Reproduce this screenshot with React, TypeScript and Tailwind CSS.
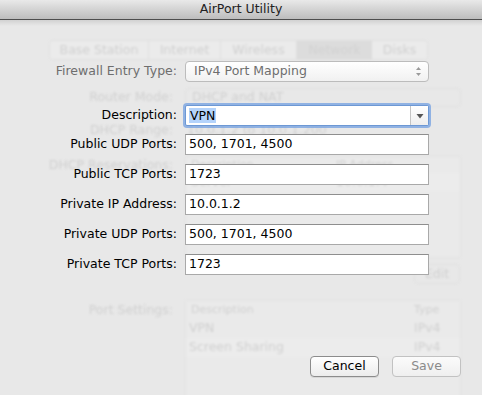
import React from 'react'

const font = { fontFamily: '"DejaVu Sans", "Liberation Sans", sans-serif' }

// faint, blurred window lying behind the sheet
function BackWindow() {
  return (
    <div className="absolute inset-0 text-[12.5px] text-[#d0d0d0] blur-[1.2px]">
      <div className="ml-[49px] mt-[20px] flex h-[20px] w-[379px] rounded-[4px] border border-[#e0e0e0] bg-[#ebebeb]">
        <div className="flex w-[99px] items-center justify-center border-r border-[#e0e0e0]">Base Station</div>
        <div className="flex w-[72px] items-center justify-center border-r border-[#e0e0e0]">Internet</div>
        <div className="flex w-[76px] items-center justify-center border-r border-[#e0e0e0]">Wireless</div>
        <div className="flex w-[75px] items-center justify-center bg-[#dcdcdc] text-[#d2d2d2]">Network</div>
        <div className="flex flex-1 items-center justify-center">Disks</div>
      </div>
      <div className="mt-[27px] flex h-[20px] items-center">
        <div className="w-[177px] pr-1 text-right">Router Mode:</div>
        <div className="ml-[8px] flex h-[19px] w-[276px] items-center rounded-[4px] border border-[#e0e0e0] pl-[6px]">DHCP and NAT</div>
      </div>
      <div className="mt-[13px] flex h-[20px] items-center">
        <div className="w-[177px] pr-1 text-right">DHCP Range:</div>
        <div className="ml-[10px]">10.0.1.2 to 10.0.1.200</div>
      </div>
      <div className="mt-[16px] flex">
        <div className="w-[177px] pr-1 text-right">DHCP Reservations:</div>
        <div className="ml-[8px] w-[276px] border border-[#e3e3e3] bg-[#eaeaea]">
          <div className="flex h-[16px] items-center text-[11px]">
            <div className="w-[150px] pl-[5px]">Description</div>
            <div>IP Address</div>
          </div>
          <div className="flex h-[18px] items-center bg-[#ececec]">
            <div className="w-[150px] pl-[5px]">Server</div>
            <div>10.0.1.4</div>
          </div>
          <div className="h-[66px]" />
        </div>
      </div>
      <div className="mt-[6px] flex justify-end pr-[22px]">
        <div className="flex h-[20px] w-[46px] items-center justify-center rounded-[4px] border border-[#e0e0e0]">Edit</div>
      </div>
      <div className="mt-[16px] flex">
        <div className="w-[177px] pt-[1px] pr-1 text-right">Port Settings:</div>
        <div className="ml-[8px] w-[276px] border border-[#e4e4e4] bg-[#eaeaea]">
          <div className="flex h-[18px] items-center text-[11px]">
            <div className="w-[228px] pl-[5px]">Description</div>
            <div>Type</div>
          </div>
          <div className="flex h-[19px] items-center">
            <div className="w-[228px] pl-[3px]">VPN</div>
            <div>IPv4</div>
          </div>
          <div className="flex h-[19px] items-center bg-[#ececec]">
            <div className="w-[228px] pl-[3px]">Screen Sharing</div>
            <div>IPv4</div>
          </div>
          <div className="h-[40px]" />
        </div>
      </div>
    </div>
  )
}

function Field({ label, value }: { label: string; value: string }) {
  return (
    <div className="flex h-[21px] items-center">
      <div className="w-[177px] text-right text-black">{label}</div>
      <div className="ml-[8px] flex h-[21px] w-[244px] items-center border border-[#a9a9a9] border-t-[#8e8e8e] bg-white pl-[3px] text-black">
        {value}
      </div>
    </div>
  )
}

export default function App() {
  return (
    <div className="h-[395px] w-[482px] overflow-hidden bg-[#e8e8e8] text-[12.5px]" style={font}>
      <div className="flex h-[20px] items-center justify-center border-b border-[#4d4d4d] bg-gradient-to-b from-[#e9e9e9] to-[#bdbdbd] text-[12.5px] text-[#222]">
        AirPort Utility
      </div>
      <div className="relative h-[375px]">
        <BackWindow />
        <div className="absolute inset-x-0 top-0 h-[6px] bg-gradient-to-b from-[#c8c8c8]/70 to-transparent" />
        <div className="absolute inset-0 pt-[41px]">
          <div className="flex h-[21px] items-center">
            <div className="w-[177px] text-right text-[#6e6e6e]">Firewall Entry Type:</div>
            <div className="ml-[8px] flex h-[21px] w-[244px] items-center justify-between rounded-[4px] border border-[#bcbcbc] bg-gradient-to-b from-white to-[#f1f1f1] pl-[8px] pr-[6px] text-[#6e6e6e]">
              <span>IPv4 Port Mapping</span>
              <svg width="7" height="11" viewBox="0 0 7 11">
                <path d="M3.5 1 L6 4 L1 4 Z" fill="#9a9a9a" />
                <path d="M3.5 10 L6 7 L1 7 Z" fill="#9a9a9a" />
              </svg>
            </div>
          </div>
          <div className="mt-[23px] flex h-[21px] items-center">
            <div className="w-[177px] text-right text-black">Description:</div>
            <div className="ml-[8px] flex h-[21px] w-[244px] rounded-[2px] border border-[#6d98d4] bg-white shadow-[0_0_0_2px_rgba(115,160,225,0.75)]">
              <div className="flex flex-1 items-center pl-[3px] text-black">
                <span className="bg-[#b4d3fb] px-[1px] leading-[15px]">VPN</span>
              </div>
              <div className="flex w-[18px] items-center justify-center border-l border-[#c4c4c4] bg-gradient-to-b from-white to-[#eeeeee]">
                <svg width="8" height="6" viewBox="0 0 8 6">
                  <path d="M0.5 1 L7.5 1 L4 5.5 Z" fill="#555" />
                </svg>
              </div>
            </div>
          </div>
          <div className="mt-[8px] flex flex-col gap-[9px]">
            <Field label="Public UDP Ports:" value="500, 1701, 4500" />
            <Field label="Public TCP Ports:" value="1723" />
            <Field label="Private IP Address:" value="10.0.1.2" />
            <Field label="Private UDP Ports:" value="500, 1701, 4500" />
            <Field label="Private TCP Ports:" value="1723" />
          </div>
          <div className="mt-[81px] flex justify-end gap-[13px] pr-[21px]">
            <button className="flex h-[21px] w-[69px] items-center justify-center rounded-[4px] border border-[#8c8c8c] bg-gradient-to-b from-white to-[#ececec] text-black shadow-[0_1px_0_rgba(0,0,0,0.08)]">
              Cancel
            </button>
            <button className="flex h-[21px] w-[69px] items-center justify-center rounded-[4px] border border-[#c2c2c2] bg-gradient-to-b from-[#fbfbfb] to-[#efefef] text-[#8a8a8a]">
              Save
            </button>
          </div>
        </div>
      </div>
    </div>
  )
}
